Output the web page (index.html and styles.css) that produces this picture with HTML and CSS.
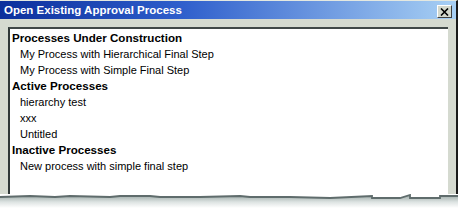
FILE: index.html
```html
<!DOCTYPE html>
<html>
<head>
<meta charset="utf-8">
<link rel="stylesheet" href="styles.css">
</head>
<body>
<div class="window">
  <div class="titlebar">
    <span class="title">Open Existing Approval Process</span>
    <span class="close"><svg width="9" height="8" viewBox="0 0 9 8" xmlns="http://www.w3.org/2000/svg"><path d="M1 0.5 L8 7.5 M8 0.5 L1 7.5" stroke="#000" stroke-width="1.6"/></svg></span>
  </div>
  <div class="client">
    <div class="listbox">
      <div class="group">Processes Under Construction</div>
      <div class="item">My Process with Hierarchical Final Step</div>
      <div class="item">My Process with Simple Final Step</div>
      <div class="group">Active Processes</div>
      <div class="item">hierarchy test</div>
      <div class="item">xxx</div>
      <div class="item">Untitled</div>
      <div class="group">Inactive Processes</div>
      <div class="item">New process with simple final step</div>
    </div>
  </div>
</div>
<svg class="torn" width="458" height="14" viewBox="0 0 458 14" xmlns="http://www.w3.org/2000/svg">
  <defs>
    <linearGradient id="fade" x1="0" y1="0" x2="0" y2="1">
      <stop offset="0" stop-color="#a4b0ae"/>
      <stop offset="0.5" stop-color="#dde3e2"/>
      <stop offset="1" stop-color="#ffffff"/>
    </linearGradient>
  </defs>
  <rect x="0" y="2" width="458" height="12" fill="url(#fade)"/>
  <path d="M0 0 H458 V2 L440 2 L440 4 L410 4 L410 1 L400 4 L372 4 L372 2 L330 4 L290 3 L250 3 L240 2 L200 3 L160 3 L150 2 L120 2 L110 3 L70 2 L55 3 L30 2 L0 3 Z" fill="#ffffff"/>
  <path d="M0 3 L30 2 L55 3 L70 2 L110 3 L120 2 L150 2 L160 3 L200 3 L240 2 L250 3 L290 3 L330 4 L372 2 L372 4 L400 4 L410 1 L410 4 L440 4 L440 2 L458 2" fill="none" stroke="#5f6c6c" stroke-width="1.8"/>
</svg>
</body>
</html>
```

FILE: styles.css
```css
html, body {
  margin: 0;
  padding: 0;
  background: #ffffff;
}

.window {
  width: 458px;
  height: 194px;
  display: flex;
  flex-direction: column;
  background: #d5dad0;
  box-sizing: border-box;
  border-top: 1px solid #e4e8e0;
  border-right: 2px solid #1a1a1a;
  overflow: hidden;
}

.titlebar {
  height: 18px;
  display: flex;
  align-items: center;
  justify-content: space-between;
  padding: 0 4px 0 4px;
  background: linear-gradient(to right, #0b2f9c 0%, #2f5fcc 40%, #a8d0f4 100%);
}

.title {
  font-family: "Liberation Sans", Arial, sans-serif;
  font-weight: bold;
  font-size: 11.5px;
  color: #ffffff;
}

.close {
  width: 15px;
  height: 13px;
  box-sizing: border-box;
  background: #d4d8cc;
  border-top: 1px solid #ffffff;
  border-left: 1px solid #ffffff;
  border-right: 1px solid #404040;
  border-bottom: 1px solid #404040;
  display: flex;
  align-items: center;
  justify-content: center;
  margin-top: 3px;
}

.client {
  flex: 1;
  padding: 8px 8px 0 8px;
  display: flex;
}

.listbox {
  flex: 1;
  background: #ffffff;
  border-top: 2px solid #404848;
  border-left: 2px solid #303838;
  padding: 1px 0 0 2px;
  font-family: "Liberation Sans", Arial, sans-serif;
  font-size: 11px;
  color: #000000;
}

.group {
  font-weight: bold;
  font-size: 11.6px;
  line-height: 16px;
  height: 16px;
}

.item {
  padding-left: 8px;
  line-height: 16px;
  height: 16px;
}

.torn {
  display: block;
}
```
